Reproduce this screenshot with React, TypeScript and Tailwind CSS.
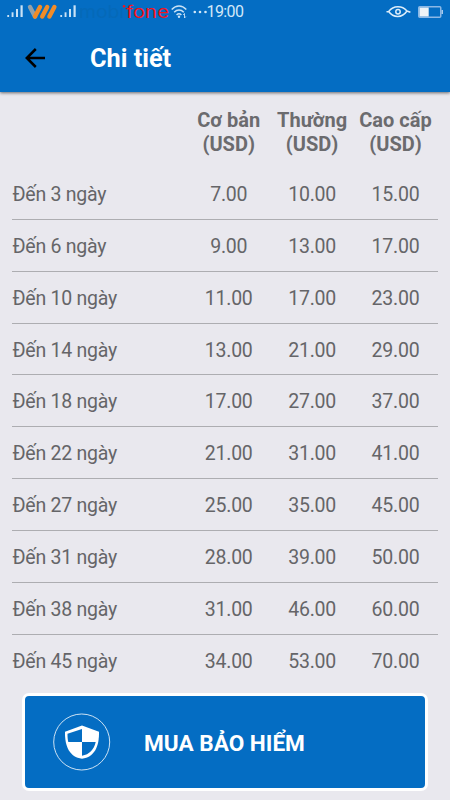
const rows = [
  { label: 'Đến 3 ngày', prices: ['7.00', '10.00', '15.00'] },
  { label: 'Đến 6 ngày', prices: ['9.00', '13.00', '17.00'] },
  { label: 'Đến 10 ngày', prices: ['11.00', '17.00', '23.00'] },
  { label: 'Đến 14 ngày', prices: ['13.00', '21.00', '29.00'] },
  { label: 'Đến 18 ngày', prices: ['17.00', '27.00', '37.00'] },
  { label: 'Đến 22 ngày', prices: ['21.00', '31.00', '41.00'] },
  { label: 'Đến 27 ngày', prices: ['25.00', '35.00', '45.00'] },
  { label: 'Đến 31 ngày', prices: ['28.00', '39.00', '50.00'] },
  { label: 'Đến 38 ngày', prices: ['31.00', '46.00', '60.00'] },
  { label: 'Đến 45 ngày', prices: ['34.00', '53.00', '70.00'] },
]

const plans = ['Cơ bản', 'Thường', 'Cao cấp']

function Signal({ className }: { className?: string }) {
  return (
    <svg className={className} width="17" height="13" viewBox="0 0 17 13" fill="#c9e2f6">
      <rect x="0.3" y="10" width="1.8" height="2" />
      <rect x="4.6" y="7.3" width="1.9" height="4.7" />
      <rect x="9" y="4" width="2" height="8" />
      <rect x="13.5" y="0.3" width="2.2" height="11.7" />
    </svg>
  )
}

function StatusBar() {
  return (
    <div className="flex h-6 items-center">
      <Signal className="mb-px ml-[6.5px] shrink-0" />
      <svg className="mb-px ml-[3px] shrink-0" width="31" height="16" viewBox="0 0 31 16" fill="none" strokeWidth="4.4" strokeLinecap="round">
        <path d="M3 3l5 9.5" stroke="#94a0a8" />
        <path d="M13 3L8 12.5M20.2 3l-5 9.5M27.4 3l-5 9.5" stroke="#f28c28" />
      </svg>
      <Signal className="mb-px ml-[2px] shrink-0" />
      <svg className="ml-[2px] shrink-0" width="91" height="18" viewBox="0 0 91 18">
        <text x="0" y="14.7" fontFamily="Inter, sans-serif" fontSize="17" textLength="45" lengthAdjust="spacingAndGlyphs" fill="#0569b8">mobı</text>
        <text x="47" y="14.7" fontFamily="Inter, sans-serif" fontSize="17" textLength="43" lengthAdjust="spacingAndGlyphs" fill="#f5131c">fone</text>
        <circle cx="45" cy="3.2" r="1.2" fill="#f5131c" />
      </svg>
      <svg className="ml-px shrink-0" width="17" height="14" viewBox="0 0 17 14" fill="none" stroke="#c9e2f6" strokeWidth="1.5">
        <path d="M0.7 4.6C5-.2 11-.2 15.3 4.6M3.2 7.3c2.8-3 6.8-3 9.6 0M5.6 10c1.5-1.5 3.3-1.5 4.8 0" />
        <circle cx="8" cy="11.7" r="1.2" fill="#c9e2f6" stroke="none" />
        <path d="M13.5 8.5V13M12.2 10l1.3-1.5M14.8 11.5L13.5 13" strokeWidth="0.9" />
      </svg>
      <svg className="mb-px ml-[5px] shrink-0" width="15" height="4" viewBox="0 0 15 4" fill="#d3e8f8">
        <circle cx="1.8" cy="2" r="1.3" />
        <circle cx="7" cy="2" r="1.3" />
        <circle cx="12.5" cy="2" r="1.3" />
      </svg>
      <span className="-ml-px text-[16px] leading-6 tracking-[-0.6px] text-[#d3e8f8]">19:00</span>
      <svg className="mr-[7px] mb-px ml-auto shrink-0" width="25" height="12" viewBox="0 0 25 12" fill="none" stroke="#dcedfa" strokeWidth="1.5">
        <path d="M0.5 5.8l2.2-.3C7.5-.6 16-.6 21 5l3.4 1.2M2.7 5.5C7.5 12.2 16 12.2 21 5" />
        <circle cx="12" cy="5.7" r="2.2" />
      </svg>
      <svg className="mr-[7px] mb-px shrink-0" width="25" height="12" viewBox="0 0 25 12">
        <rect x="0.75" y="0.75" width="22" height="10.5" rx="1" fill="none" stroke="#8bb8e6" strokeWidth="1.5" />
        <rect x="1.5" y="1.5" width="9.2" height="9" fill="#eef3f7" />
        <rect x="23.5" y="4" width="1.5" height="4" fill="#a9cbed" />
      </svg>
    </div>
  )
}

export default function App() {
  return (
    <div className="flex h-[800px] w-[450px] flex-col overflow-hidden bg-[#e9e8ee] font-[Roboto,'Noto_Sans',sans-serif]">
      <header className="relative h-[92px] shrink-0 bg-[#046dc3] shadow-[0_1px_3px_rgba(0,0,0,0.55)]">
        <StatusBar />
        <div className="flex h-[68px] items-center pl-[25px]">
          <svg className="mb-px" width="21" height="20" viewBox="0 0 21 20" fill="none" stroke="#000" strokeWidth="2.5">
            <path d="M20 10H2.2M10.8 1L1.8 10l9 9" />
          </svg>
          <h1 className="mt-[2px] ml-11 text-[25.3px] leading-8 font-bold text-white">Chi tiết</h1>
        </div>
      </header>

      <main className="px-3 text-[#656568]">
        <div className="grid h-[76px] grid-cols-[175px_repeat(3,83.4px)] pt-[15.5px] text-center text-[20px] leading-6 font-bold text-[#6b6b6e]">
          <span />
          {plans.map((plan) => (
            <div key={plan} className="whitespace-nowrap">
              {plan}
              <br />
              (USD)
            </div>
          ))}
        </div>
        <div className="divide-y divide-[#adadb1]">
          {rows.map((row) => (
            <div key={row.label} className="grid h-[51.85px] grid-cols-[175px_repeat(3,83.4px)] items-center pt-[2.5px] text-[19.5px] tracking-[-0.25px]">
              <span className="pl-[0.5px]">{row.label}</span>
              {row.prices.map((price, i) => (
                <span key={i} className="text-center">{price}</span>
              ))}
            </div>
          ))}
        </div>
      </main>

      <button className="mt-[6.5px] ml-[22px] flex h-[98px] w-[406px] shrink-0 items-center rounded-[7px] border-[3px] border-white bg-[#046dc3] pl-[28px] text-white">
        <svg width="58" height="58" viewBox="0 0 58 58">
          <circle cx="28.7" cy="29" r="28" fill="none" stroke="#fff" strokeWidth="0.8" />
          <path d="M29 12.5l17 6.2c.3 14.5-4.5 25.5-17 27-12.5-1.5-17.3-12.5-17-27z" fill="#fff" />
          <path d="M29 16v13H15.3c-.7-2.5-.8-5-.8-8.2zM29 29h13.7c-1.7 7.5-6.3 12.6-13.7 13.7z" fill="#046dc3" />
        </svg>
        <span className="mt-[4px] ml-[33px] text-[22.6px] font-bold">MUA BẢO HIỂM</span>
      </button>
    </div>
  )
}
